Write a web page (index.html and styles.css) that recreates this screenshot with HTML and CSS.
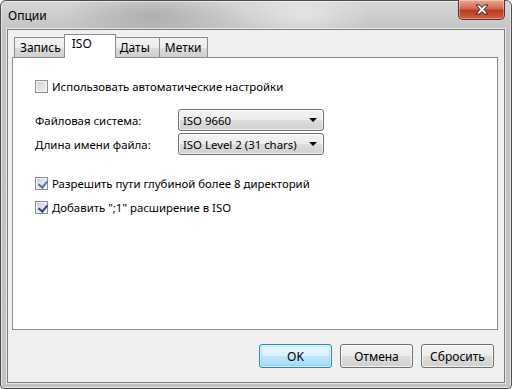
FILE: index.html
```html
<!DOCTYPE html>
<html lang="ru">
<head>
    <meta charset="UTF-8">
    <title>Опции</title>
    <link rel="stylesheet" href="styles.css">
</head>
<body>
    <div class="window">
        <div class="titlebar">
            <span class="title">Опции</span>
            <div class="close-btn">
                <svg width="14" height="11" viewBox="0 0 14 11">
                    <path d="M1 1 H4.5 L7 3.6 L9.5 1 H13 L9 5.5 L13 10 H9.5 L7 7.4 L4.5 10 H1 L5 5.5 Z" fill="#fff" stroke="#3c2320" stroke-width="1" stroke-linejoin="round"/>
                </svg>
            </div>
        </div>

        <div class="client">
            <div class="tabs">
                <div class="tab">Запись</div>
                <div class="tab active">ISO</div>
                <div class="tab">Даты</div>
                <div class="tab">Метки</div>
            </div>

            <div class="panel">
                <label class="check-row">
                    <span class="checkbox"></span>
                    Использовать автоматические настройки
                </label>

                <div class="form-rows">
                    <div class="form-row">
                        <span class="form-label">Файловая система:</span>
                        <div class="combo"><span>ISO 9660</span><span class="arrow"></span></div>
                    </div>
                    <div class="form-row">
                        <span class="form-label">Длина имени файла:</span>
                        <div class="combo"><span>ISO Level 2 (31 chars)</span><span class="arrow"></span></div>
                    </div>
                </div>

                <div class="check-group">
                    <label class="check-row">
                        <span class="checkbox checked faded"></span>
                        Разрешить пути глубиной более 8 директорий
                    </label>
                    <label class="check-row">
                        <span class="checkbox checked"></span>
                        Добавить ";1" расширение в ISO
                    </label>
                </div>
            </div>

            <div class="buttons">
                <button class="btn btn-default">OK</button>
                <button class="btn">Отмена</button>
                <button class="btn">Сбросить</button>
            </div>
        </div>
    </div>
</body>
</html>
```

FILE: styles.css
```css
* {
    box-sizing: border-box;
    margin: 0;
    padding: 0;
}

body {
    font-family: "Noto Sans", "Open Sans", sans-serif;
    font-size: 11.4px;
    color: #000;
    background: #fff;
}

.window {
    width: 512px;
    height: 389px;
    border: 1px solid #4d4d4d;
    border-radius: 6px 6px 4px 4px;
    padding: 0 6px 5px;
    display: flex;
    flex-direction: column;
    background:
        radial-gradient(ellipse 90px 30px at 150px 14px, rgba(120,120,120,0.35), transparent),
        radial-gradient(ellipse 70px 30px at 300px 14px, rgba(255,255,255,0.45), transparent),
        linear-gradient(#d6d6d6, #c4c4c4 30px, #c2c2c2);
    box-shadow: inset 0 0 0 1px rgba(255,255,255,0.5);
}

.titlebar {
    height: 28px;
    display: flex;
    align-items: flex-start;
}

.title {
    padding: 7px 0 0 1px;
    font-size: 12px;
    line-height: 16px;
}

.close-btn {
    margin-left: auto;
    margin-top: -1px;
    width: 47px;
    height: 20px;
    border: 1px solid #6b2a20;
    border-top: none;
    border-radius: 0 0 5px 5px;
    background: linear-gradient(#e8a898, #d06850 45%, #b83c20 55%, #cf6245);
    display: flex;
    align-items: center;
    justify-content: center;
    box-shadow: inset 0 0 0 1px rgba(255,255,255,0.35);
}

.client {
    flex: 1;
    display: flex;
    flex-direction: column;
    background: #f0f0f0;
    border: 1px solid #7e7e7e;
    box-shadow: 0 0 0 1px rgba(255,255,255,0.6);
    padding: 4px 6px 0 4px;
}

.tabs {
    display: flex;
    align-items: flex-end;
    height: 23px;
    padding-left: 2px;
    position: relative;
    z-index: 1;
}

.tab {
    height: 20px;
    min-width: 46px;
    padding: 2px 5px 0;
    margin-right: -1px;
    border: 1px solid #898c95;
    border-bottom: none;
    background: linear-gradient(#f3f3f3, #ebebeb 50%, #dddddd 51%, #cfcfcf);
    font-size: 12px;
    line-height: 16px;
}

.tab.active {
    height: 24px;
    min-width: 52px;
    margin: 0 -1px -1px -2px;
    padding: 1px 7px 0;
    background: #fff;
    position: relative;
}

.tab.active + .tab {
    margin-left: -1px;
}

.panel {
    height: 273px;
    background: #fff;
    border: 1px solid #898c95;
    padding: 20px 22px 0;
}

.check-row {
    display: flex;
    align-items: center;
    gap: 4px;
    height: 17px;
    line-height: 17px;
    white-space: nowrap;
}

.checkbox {
    width: 13px;
    height: 13px;
    flex-shrink: 0;
    border: 1px solid #8e8f8f;
    background: linear-gradient(135deg, #cbcfd5, #f6f6f6);
    box-shadow: inset 0 0 0 1px #f4f4f4;
    position: relative;
}

.checkbox.checked::after {
    content: "";
    position: absolute;
    left: 3.5px;
    top: 0.5px;
    width: 4px;
    height: 7px;
    border: solid #2b4a86;
    border-width: 0 2px 2px 0;
    transform: rotate(40deg);
}

.checkbox.faded::after {
    border-color: #5b74a6;
}

.form-rows {
    margin-top: 14px;
    display: flex;
    flex-direction: column;
    gap: 2px;
}

.form-row {
    display: flex;
    align-items: center;
}

.form-label {
    width: 143px;
}

.combo {
    width: 146px;
    height: 22px;
    display: flex;
    align-items: center;
    justify-content: space-between;
    padding: 0 6px 0 4px;
    white-space: nowrap;
    border: 1px solid #707070;
    border-radius: 3px;
    background: linear-gradient(#f3f3f3, #ebebeb 50%, #dddddd 51%, #cfcfcf);
    box-shadow: inset 0 0 0 1px rgba(255,255,255,0.7);
}

.arrow {
    width: 0;
    height: 0;
    border-left: 4px solid transparent;
    border-right: 4px solid transparent;
    border-top: 4px solid #000;
}

.check-group {
    margin-top: 20px;
    display: flex;
    flex-direction: column;
    gap: 7px;
}

.buttons {
    display: flex;
    justify-content: flex-end;
    gap: 8px;
    padding: 14px 4px 0 0;
}

.btn {
    width: 73px;
    height: 24px;
    font-family: inherit;
    font-size: 12px;
    color: #000;
    border: 1px solid #707070;
    border-radius: 3px;
    background: linear-gradient(#f3f3f3, #ebebeb 50%, #dddddd 51%, #cfcfcf);
    box-shadow: inset 0 0 0 1px rgba(255,255,255,0.7);
}

.btn-default {
    border-color: #3c7fb1;
    background: linear-gradient(#eaf6fd, #d9f0fc 50%, #bee6fd 51%, #a7d9f5);
    box-shadow: inset 0 0 0 1px rgba(255,255,255,0.6), inset 0 0 0 2px #48d1fa55;
}
```
